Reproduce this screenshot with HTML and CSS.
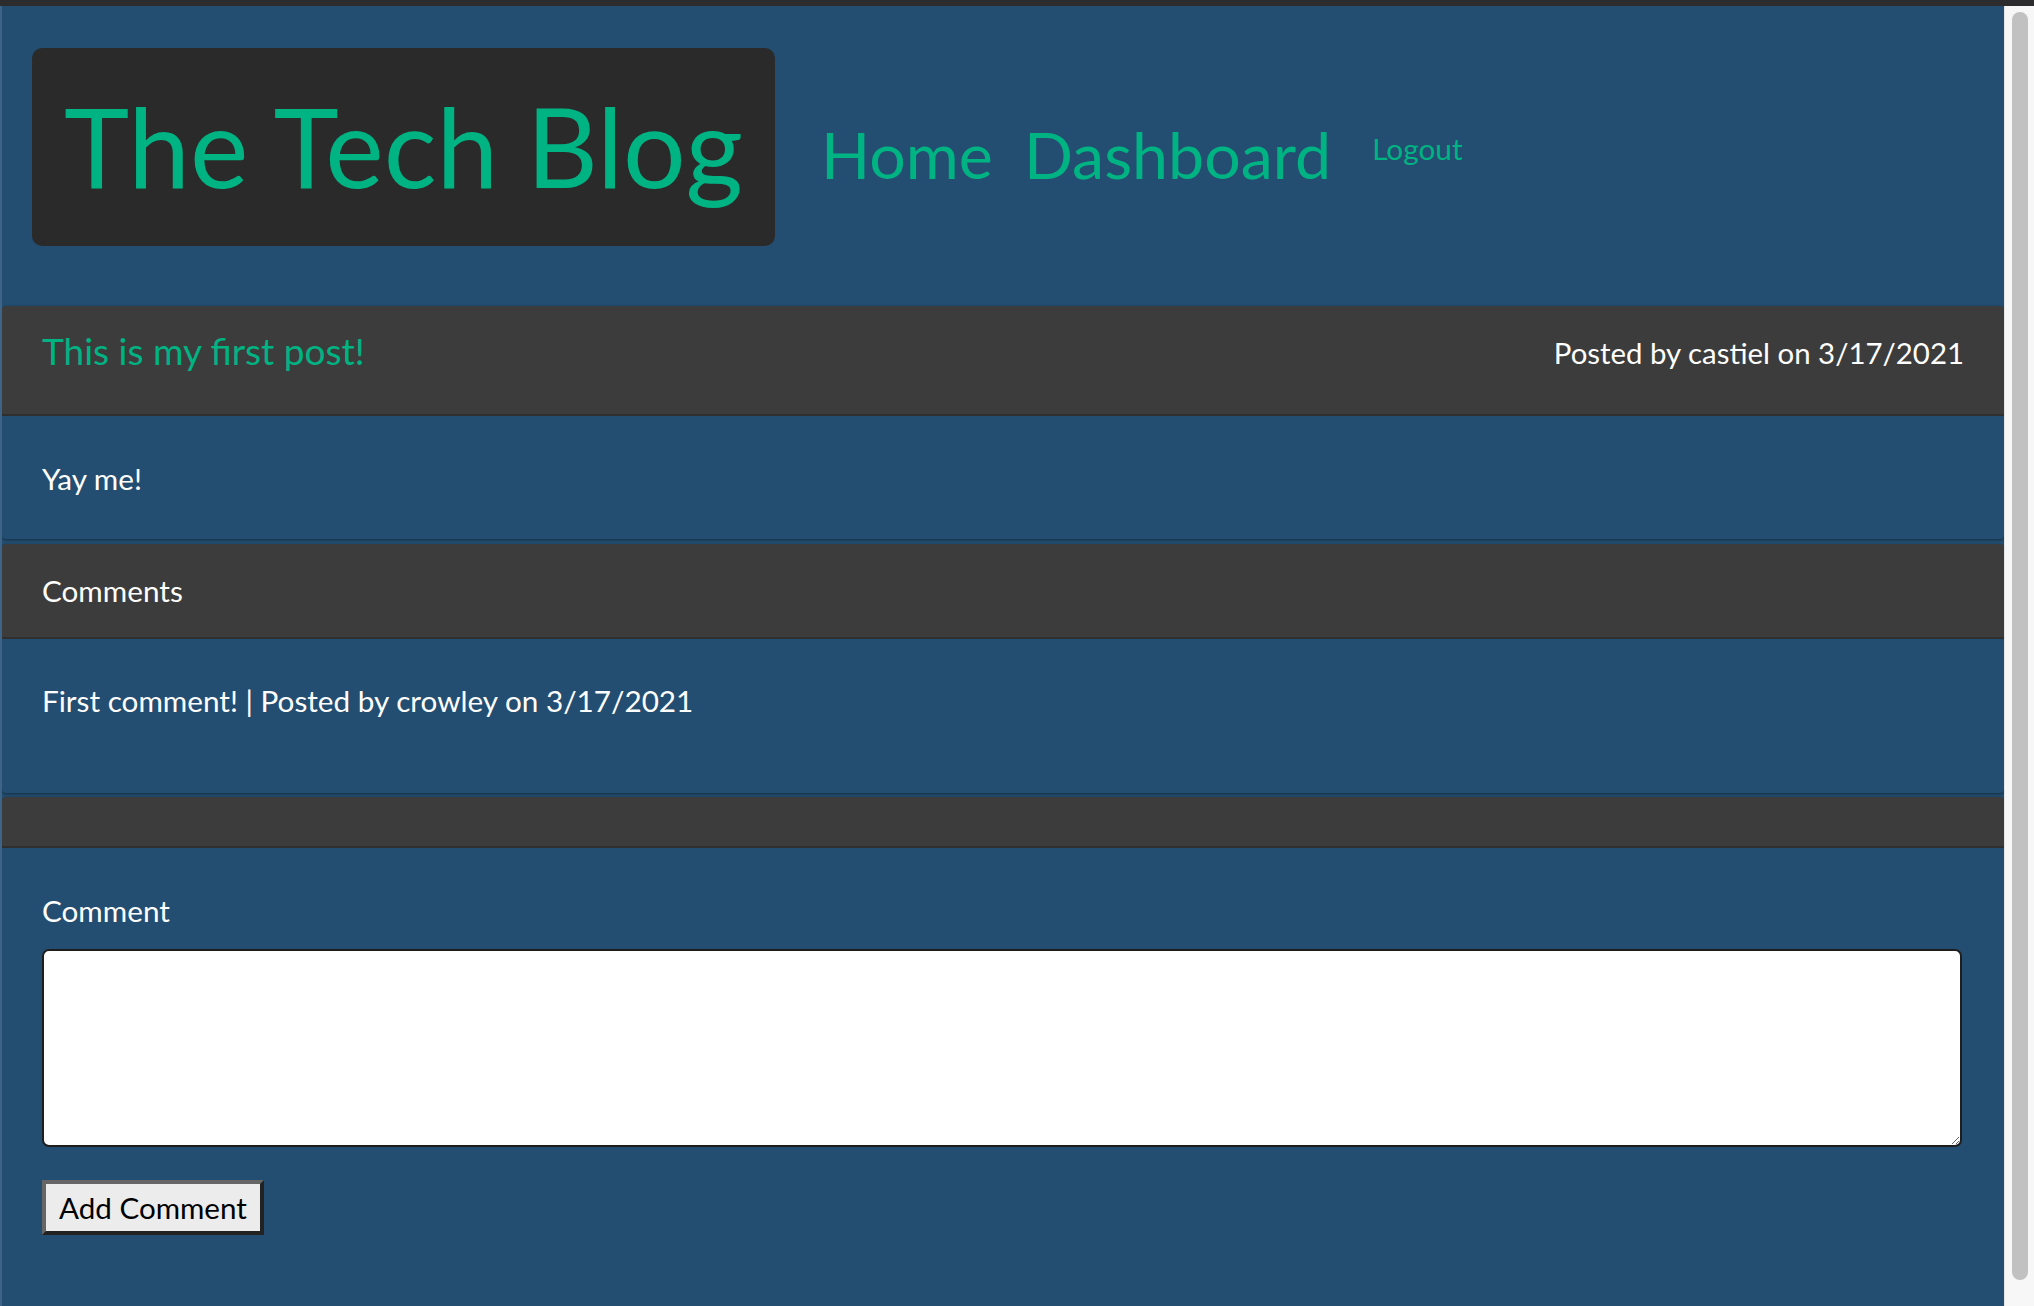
FILE: index.html
```html
<!DOCTYPE html>
<html lang="en">
<head>
<meta charset="utf-8">
<title>The Tech Blog</title>
<link rel="stylesheet" href="styles.css">
</head>
<body>
<div class="window">
  <div class="topbar"></div>
  <div class="frame">
    <div class="page">
      <header class="site-header">
        <a class="logo" href="#">The Tech Blog</a>
        <nav class="nav">
          <a class="nav-link nav-home" href="#">Home</a>
          <a class="nav-link nav-dash" href="#">Dashboard</a>
          <a class="nav-link nav-logout" href="#">Logout</a>
        </nav>
      </header>
      <main class="content">
        <article class="card">
          <div class="card-header post-header">
            <h2 class="post-title">This is my first post!</h2>
            <span class="post-meta">Posted by castiel on 3/17/2021</span>
          </div>
          <div class="card-body post-body">
            <p class="text">Yay me!</p>
          </div>
        </article>
        <section class="card">
          <div class="card-header comments-header">
            <h3 class="text">Comments</h3>
          </div>
          <div class="card-body comments-body">
            <p class="text">First comment! | Posted by crowley on 3/17/2021</p>
          </div>
        </section>
        <section class="card form-card">
          <div class="card-header empty-header"></div>
          <form class="card-body comment-form">
            <label class="text form-label" for="comment">Comment</label>
            <textarea id="comment" class="comment-input"></textarea>
            <button type="submit" class="submit-btn">Add Comment</button>
          </form>
        </section>
      </main>
    </div>
    <div class="scrollbar"><div class="thumb"></div></div>
  </div>
</div>
</body>
</html>
```

FILE: styles.css
```css
* { box-sizing: border-box; }

html, body {
  margin: 0;
  padding: 0;
  height: 1306px;
  overflow: hidden;
  background: #2c2c2e;
  font-family: Lato, "Open Sans", sans-serif;
}

.window {
  display: flex;
  flex-direction: column;
  height: 1306px;
}

.topbar {
  height: 6px;
  background: #2c2c2e;
  flex: none;
}

.frame {
  flex: 1;
  display: flex;
  min-height: 0;
}

.page {
  flex: 1;
  background: #234e71;
  border-left: 2px solid #3e6587;
  overflow: hidden;
}

/* header */
.site-header {
  height: 300px;
  display: flex;
  align-items: flex-start;
  padding: 42px 0 0 30px;
}

.logo {
  display: block;
  background: #2a2a2a;
  color: #00b383;
  text-decoration: none;
  font-size: 110.6px;
  line-height: 1.2;
  padding: 32px 32px 33px;
  border-radius: 10px;
}

.nav {
  display: flex;
  align-items: flex-start;
  margin-left: 46px;
}

.nav-link {
  color: #00b383;
  text-decoration: none;
  line-height: 1.2;
}

.nav-home,
.nav-dash {
  font-size: 64.5px;
  margin-top: 68px;
}

.nav-dash { margin-left: 31px; }

.nav-logout {
  font-size: 29.8px;
  margin-top: 83px;
  margin-left: 41px;
}

/* cards */
.card {
  border-radius: 4px;
  box-shadow: 0 1px 3px rgba(0, 0, 0, 0.45);
  margin-bottom: 5px;
  color: #fff;
}

.card-header {
  background: #3c3c3c;
  border-bottom: 2px solid #2f2f2f;
  border-radius: 4px 4px 0 0;
}

.text {
  margin: 0;
  font-size: 29.7px;
  line-height: 35px;
  font-weight: 400;
}

.post-header {
  display: flex;
  justify-content: space-between;
  align-items: flex-start;
  padding: 21px 40px 40px;
}

.post-title {
  margin: 0;
  font-size: 37px;
  line-height: 47px;
  font-weight: 400;
  color: #00b383;
}

.post-meta {
  font-size: 29.4px;
  line-height: 35px;
  margin-top: 8px;
  color: #fff;
}

.post-body { padding: 45px 40px 43px; }

.comments-header { padding: 29px 40px; }

.comments-body { padding: 44px 40px 75px; }

.card:nth-child(2) { margin-bottom: 4px; }

.empty-header { height: 51px; }

.comment-form {
  display: flex;
  flex-direction: column;
  align-items: flex-start;
  padding: 45px 42px 300px 40px;
}

.form-label { display: block; }

.comment-input {
  display: block;
  width: 100%;
  height: 198px;
  margin-top: 21px;
  border: 2px solid #1e1e1e;
  border-radius: 7px;
  background: #fff;
  font-family: Lato, sans-serif;
  font-size: 29.3px;
}

.submit-btn {
  margin-top: 33px;
  height: 55px;
  padding: 0 13px;
  border-width: 4px;
  border-style: solid;
  border-color: #666 #222 #222 #666;
  background: #ececec;
  color: #000;
  font-family: Lato, sans-serif;
  font-size: 29.6px;
  line-height: 35px;
}

/* fake scrollbar */
.scrollbar {
  width: 30px;
  flex: none;
  background: #f7f7f7;
  border-left: 1px solid #e4e4e4;
  padding: 6px 6px 0 7px;
}

.thumb {
  width: 16px;
  height: 1268px;
  border-radius: 8px;
  background: #c1c1c1;
}
```
